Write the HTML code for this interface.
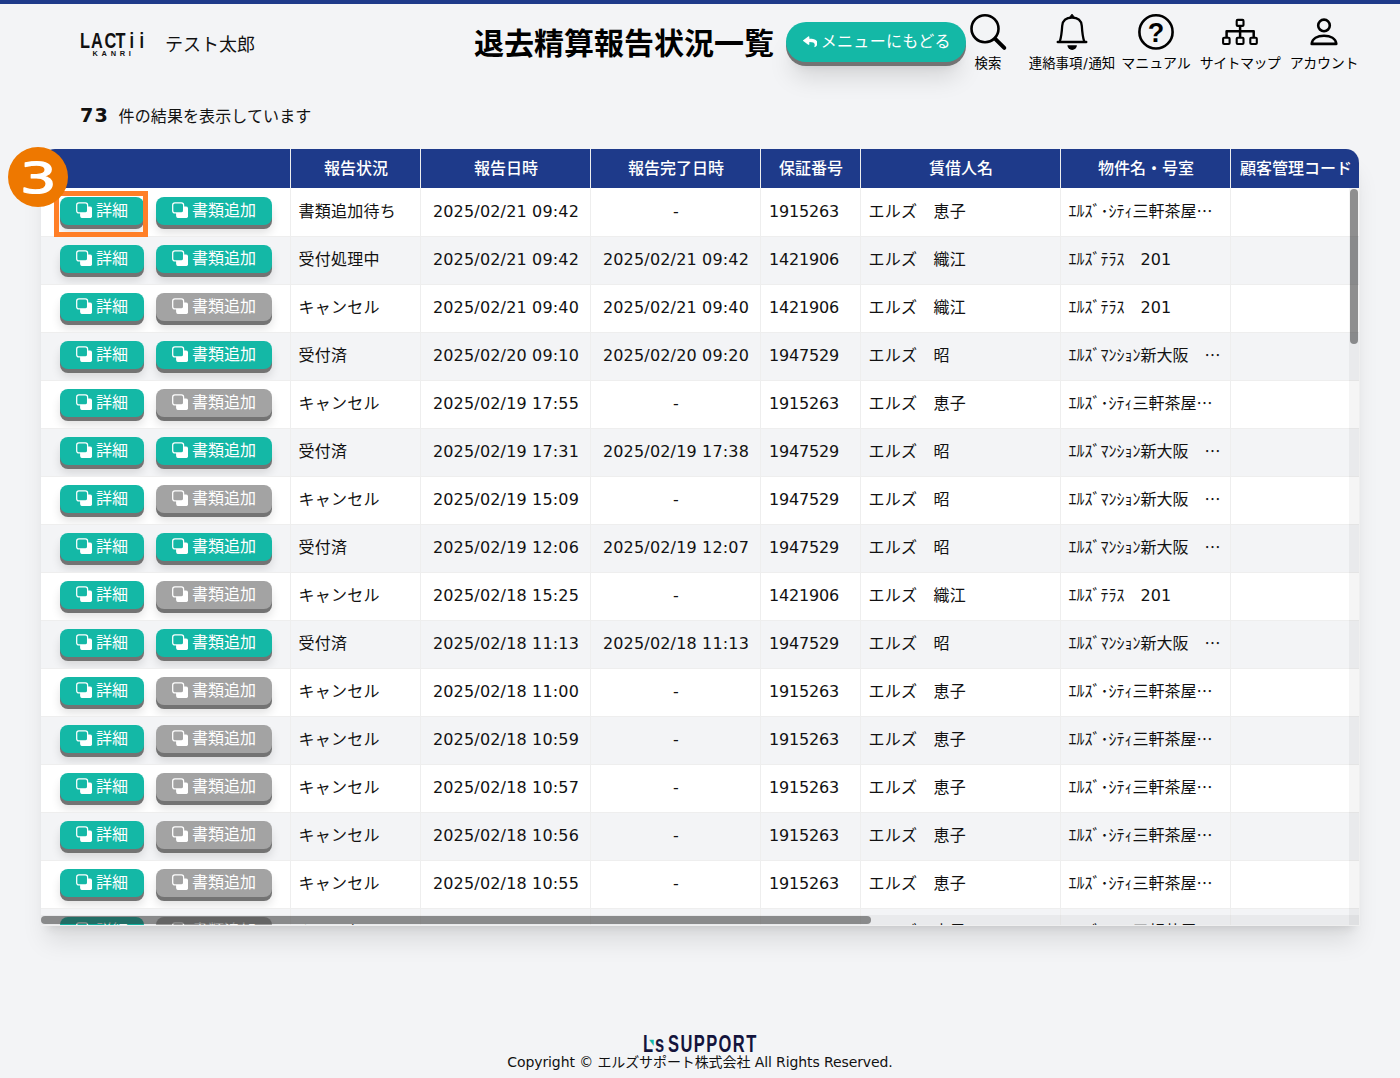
<!DOCTYPE html>
<html lang="ja">
<head>
<meta charset="utf-8">
<title>退去精算報告状況一覧</title>
<style>
*{box-sizing:border-box;margin:0;padding:0}
html,body{width:1400px;height:1078px;overflow:hidden}
body{background:#f3f4f6;font-family:"Liberation Sans","Noto Sans CJK JP",sans-serif;color:#111;position:relative}
.topbar{position:absolute;left:0;top:0;width:1400px;height:4px;background:#1e3a8a}
.logo{position:absolute;left:79.96px;top:27.9px;width:80px;color:#111}
.logo .l1{position:absolute;left:0;top:0;font-size:22.8px;line-height:24px;white-space:nowrap;font-weight:700;transform:scaleX(.717);transform-origin:0 0}
.logo .l1 span{display:inline-block}
.logo .l2{position:absolute;left:12.5px;top:21.8px;font-size:7.4px;line-height:8px;font-weight:700;letter-spacing:3.75px;white-space:nowrap}
.user{position:absolute;left:165px;top:32px;font-size:18px;line-height:26px;white-space:nowrap}
.title{position:absolute;left:474px;top:23.5px;font-size:30px;line-height:40px;font-weight:700;white-space:nowrap;color:#000}
.back{position:absolute;left:786px;top:22px;width:180px;height:40px;border-radius:20px;background:#14b8a6;box-shadow:0 4px 0 #737373,0 20px 25px -5px rgba(0,0,0,.13),0 10px 10px -6px rgba(0,0,0,.1);color:#fff;font-size:16px;line-height:40px;white-space:nowrap}
.nav{position:absolute;top:0;width:84px;height:80px;text-align:center;font-size:14px;white-space:nowrap;color:#000;font-family:"DejaVu Sans","Noto Sans CJK JP",sans-serif}
.nav svg{position:absolute;left:0;top:0}
.nav .lb{position:absolute;left:-10px;right:-10px;top:54px;line-height:18px}
.count{position:absolute;left:80px;top:102px;white-space:nowrap;font-size:16px;line-height:28px}
.count{letter-spacing:.1px}
.count b{font-family:"DejaVu Sans","Liberation Sans",sans-serif;font-size:19.2px;font-weight:700;margin-right:9.5px;letter-spacing:1.2px}
.wrap{position:absolute;left:41px;top:149px;width:1319px;height:777px;overflow:hidden;background:#fff;border-radius:14px 14px 0 0;border-right:1px solid #efefef;border-bottom:1px solid #efefef;box-shadow:0 20px 25px -5px rgba(0,0,0,.1),0 8px 10px -6px rgba(0,0,0,.1)}
table{border-collapse:collapse;table-layout:fixed;width:1500px}
th{height:39px;background:#1e3a8a;color:#fff;font-size:16px;font-weight:500;text-align:center;border-left:1px solid #eee;white-space:nowrap;overflow:hidden;padding:0 0 4px 2px}
th:first-child{border-left:none}
td{height:48px;font-size:16px;white-space:nowrap;overflow:hidden;border-left:1px solid #eee;padding:0 8px;vertical-align:middle;letter-spacing:.25px}
td:first-child{border-left:none}
tbody tr+tr td{box-shadow:inset 0 1px 0 #eee}
tr.odd td{background:#fff}
tr.even td{background:#f3f4f6}
td.c0{padding:0;position:relative}
td.c2,td.c3{text-align:center}
td.c2,td.c3,td.c4{font-family:"DejaVu Sans","Liberation Sans","Noto Sans CJK JP",sans-serif;letter-spacing:.17px;padding-bottom:2px}
td.c2,td.c3{padding-left:10px}
td.c4{letter-spacing:-.2px;padding-left:8.5px}
td.c1,td.c5,td.c6{padding-bottom:4px}
td.c6{font-family:"Noto Sans CJK JP",sans-serif;letter-spacing:0}
td.c6 .d{font-family:"DejaVu Sans",sans-serif;font-size:16px;position:relative;top:0px}
.btn{position:absolute;top:9px;height:28px;border-radius:8px;background:#14b8a6;color:#fff;box-shadow:0 4px 0 #737373,0 8px 10px rgba(0,0,0,.12);font-size:16px;line-height:28px;letter-spacing:0;display:block;white-space:nowrap}
.btn.b1{left:19px;width:83.5px}
.btn.b2{left:115px;width:116px}
.btn.dis{background:#a3a3a3}
.btn.dis .icf{fill:#a3a3a3}
.btn .ic{position:absolute;left:16px;top:5px;width:16px;height:16px}
.btn span{position:absolute;left:36px;top:0}
.hl{position:absolute;left:54px;top:191px;width:94px;height:46px;border:5px solid #ff7f27;pointer-events:none}
.badge{position:absolute;left:8px;top:147px;width:60px;height:60px}
.vsb{position:absolute;left:1349px;top:188px;width:10px;height:737px;background:rgba(0,0,0,.04)}
.vsb i{position:absolute;left:1px;top:1px;width:8px;height:155px;border-radius:4px;background:rgba(47,47,47,.515)}
.hsb{position:absolute;left:41px;top:915px;width:1318px;height:10px;background:rgba(0,0,0,.04)}
.hsb i{position:absolute;left:0;top:1px;width:830px;height:8px;border-radius:4px;background:rgba(47,47,47,.515)}
.flogo{position:absolute;left:642.8px;top:1031.7px;font-size:23.3px;line-height:24px;font-weight:700;color:#14143c;white-space:nowrap;transform:scaleX(.708);transform-origin:0 0}
.flogo span{display:inline-block}
.flogo .s{margin-left:2.75px}
.flogo .sup{margin-left:5.4px;letter-spacing:2px}
.fap{position:absolute;left:649.2px;top:1039.4px;font-family:"DejaVu Sans",sans-serif;font-size:8px;line-height:8px;color:#14b8a6;transform:scale(.75,1);transform-origin:0 0}
.fcopy{position:absolute;left:0;width:1400px;text-align:center;top:1052px;font-size:14px;line-height:20px;color:#111;font-family:"DejaVu Sans","Noto Sans CJK JP",sans-serif;white-space:nowrap;letter-spacing:-.1px}
</style>
</head>
<body>
<div class="topbar"></div>
<div class="logo"><div class="l1"><span style="margin-right:1.39px">L</span><span style="margin-right:2.3px">A</span><span style="margin-right:-.94px">C</span><span style="margin-right:5.54px">T</span><span style="margin-right:7.64px">i</span><span>i</span></div><div class="l2">KANRI</div></div>
<div class="user">テスト太郎</div>
<div class="title">退去精算報告状況一覧</div>
<div class="back"><svg style="position:absolute;left:16.5px;top:14px" width="14.5" height="11.5" viewBox="0 20 512 472" preserveAspectRatio="none"><path fill="#fff" d="M8.3 189.9l176-152c15.4-13.3 39.7-2.5 39.7 18.2v80c160.600 1.800 288 34 288 186.300 0 61.400-39.600 122.300-83.300 154.100-13.700 9.900-33.100-2.500-28.100-18.600C446 312 379 271 224 268.700V356.600c0 20.700-24.300 31.500-39.700 18.200l-176-152c-11.100-9.600-11.100-26.800 0-36.300z"/></svg><span style="position:absolute;left:34.8px;top:0;letter-spacing:.28px">メニューにもどる</span></div>

<div class="nav" style="left:946px"><svg width="84" height="56" viewBox="0 0 84 56" fill="none" stroke="#000" stroke-linecap="round"><circle cx="39" cy="28.7" r="13.5" stroke-width="2.6"/><path d="M49.2 38.9L58.3 47.9" stroke-width="4"/></svg><div class="lb" style="font-size:13.4px;top:55px">検索</div></div>
<div class="nav" style="left:1030px"><svg width="84" height="56" viewBox="0 0 84 56" fill="none" stroke="#000" stroke-width="2.5" stroke-linecap="round" stroke-linejoin="round"><path d="M27.8 42H56.2"/><path d="M29.8 41.5C31.6 36 31.9 31 32.2 25.800C32.7 20.6 36.5 17.7 42 17.7C47.5 17.7 51.3 20.6 51.8 25.800C52.1 31 52.4 36 54.2 41.5" stroke-width="2.3"/><path d="M39.600 17.2L42 14.200L44.400 17.2Z" fill="#000" stroke-width="1"/><path d="M37.400 45.2H46.900A4.750 4.8 0 0 1 37.400 45.2Z" fill="#000" stroke="none"/></svg><div class="lb" style="font-size:13.4px;top:55px">連絡事項<span style="margin:0 .8px">/</span>通知</div></div>
<div class="nav" style="left:1114px"><svg width="84" height="56" viewBox="0 0 84 56" fill="none" stroke="#000" stroke-width="2.6"><circle cx="42" cy="31.9" r="16.6"/><text x="42" y="42.1" text-anchor="middle" font-family="Liberation Sans, sans-serif" font-weight="700" font-size="27" fill="#000" stroke="none">?</text></svg><div class="lb">マニュアル</div></div>
<div class="nav" style="left:1198px"><svg width="84" height="56" viewBox="0 0 84 56" fill="none" stroke="#000" stroke-width="2.1" stroke-linejoin="round"><rect x="38.7" y="19.9" width="6.8" height="6" rx="1"/><rect x="25.1" y="37.8" width="6.5" height="6.2" rx="1"/><rect x="38.7" y="37.8" width="6.8" height="6.2" rx="1"/><rect x="52.3" y="37.8" width="6.500" height="6.2" rx="1"/><path d="M42.1 26.5V37.2M28.600 37.2V31.3H55.700V37.2" stroke-width="2.5"/></svg><div class="lb" style="letter-spacing:-.6px">サイトマップ</div></div>
<div class="nav" style="left:1282px"><svg width="84" height="56" viewBox="0 0 84 56" fill="none" stroke="#000" stroke-width="2.6" stroke-linejoin="round"><circle cx="42" cy="25.4" r="5.8"/><path d="M29.700 43.9C30.2 38.5 35.5 35.8 42 35.8S53.800 38.5 54.300 43.9Z"/></svg><div class="lb" style="letter-spacing:-.25px">アカウント</div></div>

<div class="count"><b>73</b>件の結果を表示しています</div>

<div class="wrap">
<table>
<colgroup><col style="width:249px"><col style="width:130px"><col style="width:170px"><col style="width:170px"><col style="width:100px"><col style="width:200px"><col style="width:170px"><col style="width:311px"></colgroup>
<thead><tr><th></th><th>報告状況</th><th>報告日時</th><th>報告完了日時</th><th>保証番号</th><th>賃借人名</th><th>物件名・号室</th><th style="text-align:left;padding-left:9.5px">顧客管理コード</th></tr></thead>
<tbody>
<tr class="odd"><td class="c0"><span class="btn b1"><svg class="ic" viewBox="0 0 16 16"><rect x="4.1" y="4.4" width="12" height="11.7" rx="2.3" fill="#fff"/><rect x="0.7" y="0.8" width="10.9" height="10.1" rx="2.2" fill="#14b8a6" stroke="#fff" stroke-width="1.25" class="icf"/></svg><span>詳細</span></span><span class="btn b2"><svg class="ic" viewBox="0 0 16 16"><rect x="4.1" y="4.4" width="12" height="11.7" rx="2.3" fill="#fff"/><rect x="0.7" y="0.8" width="10.9" height="10.1" rx="2.2" fill="#14b8a6" stroke="#fff" stroke-width="1.25" class="icf"/></svg><span>書類追加</span></span></td><td class="c1">書類追加待ち</td><td class="c2">2025/02/21 09:42</td><td class="c3">-</td><td class="c4">1915263</td><td class="c5">エルズ　恵子</td><td class="c6">ｴﾙｽﾞ･ｼﾃｨ三軒茶屋…</td><td class="c7"></td></tr>
<tr class="even"><td class="c0"><span class="btn b1"><svg class="ic" viewBox="0 0 16 16"><rect x="4.1" y="4.4" width="12" height="11.7" rx="2.3" fill="#fff"/><rect x="0.7" y="0.8" width="10.9" height="10.1" rx="2.2" fill="#14b8a6" stroke="#fff" stroke-width="1.25" class="icf"/></svg><span>詳細</span></span><span class="btn b2"><svg class="ic" viewBox="0 0 16 16"><rect x="4.1" y="4.4" width="12" height="11.7" rx="2.3" fill="#fff"/><rect x="0.7" y="0.8" width="10.9" height="10.1" rx="2.2" fill="#14b8a6" stroke="#fff" stroke-width="1.25" class="icf"/></svg><span>書類追加</span></span></td><td class="c1">受付処理中</td><td class="c2">2025/02/21 09:42</td><td class="c3">2025/02/21 09:42</td><td class="c4">1421906</td><td class="c5">エルズ　織江</td><td class="c6">ｴﾙｽﾞﾃﾗｽ　<span class="d">201</span></td><td class="c7"></td></tr>
<tr class="odd"><td class="c0"><span class="btn b1"><svg class="ic" viewBox="0 0 16 16"><rect x="4.1" y="4.4" width="12" height="11.7" rx="2.3" fill="#fff"/><rect x="0.7" y="0.8" width="10.9" height="10.1" rx="2.2" fill="#14b8a6" stroke="#fff" stroke-width="1.25" class="icf"/></svg><span>詳細</span></span><span class="btn b2 dis"><svg class="ic" viewBox="0 0 16 16"><rect x="4.1" y="4.4" width="12" height="11.7" rx="2.3" fill="#fff"/><rect x="0.7" y="0.8" width="10.9" height="10.1" rx="2.2" fill="#14b8a6" stroke="#fff" stroke-width="1.25" class="icf"/></svg><span>書類追加</span></span></td><td class="c1">キャンセル</td><td class="c2">2025/02/21 09:40</td><td class="c3">2025/02/21 09:40</td><td class="c4">1421906</td><td class="c5">エルズ　織江</td><td class="c6">ｴﾙｽﾞﾃﾗｽ　<span class="d">201</span></td><td class="c7"></td></tr>
<tr class="even"><td class="c0"><span class="btn b1"><svg class="ic" viewBox="0 0 16 16"><rect x="4.1" y="4.4" width="12" height="11.7" rx="2.3" fill="#fff"/><rect x="0.7" y="0.8" width="10.9" height="10.1" rx="2.2" fill="#14b8a6" stroke="#fff" stroke-width="1.25" class="icf"/></svg><span>詳細</span></span><span class="btn b2"><svg class="ic" viewBox="0 0 16 16"><rect x="4.1" y="4.4" width="12" height="11.7" rx="2.3" fill="#fff"/><rect x="0.7" y="0.8" width="10.9" height="10.1" rx="2.2" fill="#14b8a6" stroke="#fff" stroke-width="1.25" class="icf"/></svg><span>書類追加</span></span></td><td class="c1">受付済</td><td class="c2">2025/02/20 09:10</td><td class="c3">2025/02/20 09:20</td><td class="c4">1947529</td><td class="c5">エルズ　昭</td><td class="c6">ｴﾙｽﾞﾏﾝｼｮﾝ新大阪　…</td><td class="c7"></td></tr>
<tr class="odd"><td class="c0"><span class="btn b1"><svg class="ic" viewBox="0 0 16 16"><rect x="4.1" y="4.4" width="12" height="11.7" rx="2.3" fill="#fff"/><rect x="0.7" y="0.8" width="10.9" height="10.1" rx="2.2" fill="#14b8a6" stroke="#fff" stroke-width="1.25" class="icf"/></svg><span>詳細</span></span><span class="btn b2 dis"><svg class="ic" viewBox="0 0 16 16"><rect x="4.1" y="4.4" width="12" height="11.7" rx="2.3" fill="#fff"/><rect x="0.7" y="0.8" width="10.9" height="10.1" rx="2.2" fill="#14b8a6" stroke="#fff" stroke-width="1.25" class="icf"/></svg><span>書類追加</span></span></td><td class="c1">キャンセル</td><td class="c2">2025/02/19 17:55</td><td class="c3">-</td><td class="c4">1915263</td><td class="c5">エルズ　恵子</td><td class="c6">ｴﾙｽﾞ･ｼﾃｨ三軒茶屋…</td><td class="c7"></td></tr>
<tr class="even"><td class="c0"><span class="btn b1"><svg class="ic" viewBox="0 0 16 16"><rect x="4.1" y="4.4" width="12" height="11.7" rx="2.3" fill="#fff"/><rect x="0.7" y="0.8" width="10.9" height="10.1" rx="2.2" fill="#14b8a6" stroke="#fff" stroke-width="1.25" class="icf"/></svg><span>詳細</span></span><span class="btn b2"><svg class="ic" viewBox="0 0 16 16"><rect x="4.1" y="4.4" width="12" height="11.7" rx="2.3" fill="#fff"/><rect x="0.7" y="0.8" width="10.9" height="10.1" rx="2.2" fill="#14b8a6" stroke="#fff" stroke-width="1.25" class="icf"/></svg><span>書類追加</span></span></td><td class="c1">受付済</td><td class="c2">2025/02/19 17:31</td><td class="c3">2025/02/19 17:38</td><td class="c4">1947529</td><td class="c5">エルズ　昭</td><td class="c6">ｴﾙｽﾞﾏﾝｼｮﾝ新大阪　…</td><td class="c7"></td></tr>
<tr class="odd"><td class="c0"><span class="btn b1"><svg class="ic" viewBox="0 0 16 16"><rect x="4.1" y="4.4" width="12" height="11.7" rx="2.3" fill="#fff"/><rect x="0.7" y="0.8" width="10.9" height="10.1" rx="2.2" fill="#14b8a6" stroke="#fff" stroke-width="1.25" class="icf"/></svg><span>詳細</span></span><span class="btn b2 dis"><svg class="ic" viewBox="0 0 16 16"><rect x="4.1" y="4.4" width="12" height="11.7" rx="2.3" fill="#fff"/><rect x="0.7" y="0.8" width="10.9" height="10.1" rx="2.2" fill="#14b8a6" stroke="#fff" stroke-width="1.25" class="icf"/></svg><span>書類追加</span></span></td><td class="c1">キャンセル</td><td class="c2">2025/02/19 15:09</td><td class="c3">-</td><td class="c4">1947529</td><td class="c5">エルズ　昭</td><td class="c6">ｴﾙｽﾞﾏﾝｼｮﾝ新大阪　…</td><td class="c7"></td></tr>
<tr class="even"><td class="c0"><span class="btn b1"><svg class="ic" viewBox="0 0 16 16"><rect x="4.1" y="4.4" width="12" height="11.7" rx="2.3" fill="#fff"/><rect x="0.7" y="0.8" width="10.9" height="10.1" rx="2.2" fill="#14b8a6" stroke="#fff" stroke-width="1.25" class="icf"/></svg><span>詳細</span></span><span class="btn b2"><svg class="ic" viewBox="0 0 16 16"><rect x="4.1" y="4.4" width="12" height="11.7" rx="2.3" fill="#fff"/><rect x="0.7" y="0.8" width="10.9" height="10.1" rx="2.2" fill="#14b8a6" stroke="#fff" stroke-width="1.25" class="icf"/></svg><span>書類追加</span></span></td><td class="c1">受付済</td><td class="c2">2025/02/19 12:06</td><td class="c3">2025/02/19 12:07</td><td class="c4">1947529</td><td class="c5">エルズ　昭</td><td class="c6">ｴﾙｽﾞﾏﾝｼｮﾝ新大阪　…</td><td class="c7"></td></tr>
<tr class="odd"><td class="c0"><span class="btn b1"><svg class="ic" viewBox="0 0 16 16"><rect x="4.1" y="4.4" width="12" height="11.7" rx="2.3" fill="#fff"/><rect x="0.7" y="0.8" width="10.9" height="10.1" rx="2.2" fill="#14b8a6" stroke="#fff" stroke-width="1.25" class="icf"/></svg><span>詳細</span></span><span class="btn b2 dis"><svg class="ic" viewBox="0 0 16 16"><rect x="4.1" y="4.4" width="12" height="11.7" rx="2.3" fill="#fff"/><rect x="0.7" y="0.8" width="10.9" height="10.1" rx="2.2" fill="#14b8a6" stroke="#fff" stroke-width="1.25" class="icf"/></svg><span>書類追加</span></span></td><td class="c1">キャンセル</td><td class="c2">2025/02/18 15:25</td><td class="c3">-</td><td class="c4">1421906</td><td class="c5">エルズ　織江</td><td class="c6">ｴﾙｽﾞﾃﾗｽ　<span class="d">201</span></td><td class="c7"></td></tr>
<tr class="even"><td class="c0"><span class="btn b1"><svg class="ic" viewBox="0 0 16 16"><rect x="4.1" y="4.4" width="12" height="11.7" rx="2.3" fill="#fff"/><rect x="0.7" y="0.8" width="10.9" height="10.1" rx="2.2" fill="#14b8a6" stroke="#fff" stroke-width="1.25" class="icf"/></svg><span>詳細</span></span><span class="btn b2"><svg class="ic" viewBox="0 0 16 16"><rect x="4.1" y="4.4" width="12" height="11.7" rx="2.3" fill="#fff"/><rect x="0.7" y="0.8" width="10.9" height="10.1" rx="2.2" fill="#14b8a6" stroke="#fff" stroke-width="1.25" class="icf"/></svg><span>書類追加</span></span></td><td class="c1">受付済</td><td class="c2">2025/02/18 11:13</td><td class="c3">2025/02/18 11:13</td><td class="c4">1947529</td><td class="c5">エルズ　昭</td><td class="c6">ｴﾙｽﾞﾏﾝｼｮﾝ新大阪　…</td><td class="c7"></td></tr>
<tr class="odd"><td class="c0"><span class="btn b1"><svg class="ic" viewBox="0 0 16 16"><rect x="4.1" y="4.4" width="12" height="11.7" rx="2.3" fill="#fff"/><rect x="0.7" y="0.8" width="10.9" height="10.1" rx="2.2" fill="#14b8a6" stroke="#fff" stroke-width="1.25" class="icf"/></svg><span>詳細</span></span><span class="btn b2 dis"><svg class="ic" viewBox="0 0 16 16"><rect x="4.1" y="4.4" width="12" height="11.7" rx="2.3" fill="#fff"/><rect x="0.7" y="0.8" width="10.9" height="10.1" rx="2.2" fill="#14b8a6" stroke="#fff" stroke-width="1.25" class="icf"/></svg><span>書類追加</span></span></td><td class="c1">キャンセル</td><td class="c2">2025/02/18 11:00</td><td class="c3">-</td><td class="c4">1915263</td><td class="c5">エルズ　恵子</td><td class="c6">ｴﾙｽﾞ･ｼﾃｨ三軒茶屋…</td><td class="c7"></td></tr>
<tr class="even"><td class="c0"><span class="btn b1"><svg class="ic" viewBox="0 0 16 16"><rect x="4.1" y="4.4" width="12" height="11.7" rx="2.3" fill="#fff"/><rect x="0.7" y="0.8" width="10.9" height="10.1" rx="2.2" fill="#14b8a6" stroke="#fff" stroke-width="1.25" class="icf"/></svg><span>詳細</span></span><span class="btn b2 dis"><svg class="ic" viewBox="0 0 16 16"><rect x="4.1" y="4.4" width="12" height="11.7" rx="2.3" fill="#fff"/><rect x="0.7" y="0.8" width="10.9" height="10.1" rx="2.2" fill="#14b8a6" stroke="#fff" stroke-width="1.25" class="icf"/></svg><span>書類追加</span></span></td><td class="c1">キャンセル</td><td class="c2">2025/02/18 10:59</td><td class="c3">-</td><td class="c4">1915263</td><td class="c5">エルズ　恵子</td><td class="c6">ｴﾙｽﾞ･ｼﾃｨ三軒茶屋…</td><td class="c7"></td></tr>
<tr class="odd"><td class="c0"><span class="btn b1"><svg class="ic" viewBox="0 0 16 16"><rect x="4.1" y="4.4" width="12" height="11.7" rx="2.3" fill="#fff"/><rect x="0.7" y="0.8" width="10.9" height="10.1" rx="2.2" fill="#14b8a6" stroke="#fff" stroke-width="1.25" class="icf"/></svg><span>詳細</span></span><span class="btn b2 dis"><svg class="ic" viewBox="0 0 16 16"><rect x="4.1" y="4.4" width="12" height="11.7" rx="2.3" fill="#fff"/><rect x="0.7" y="0.8" width="10.9" height="10.1" rx="2.2" fill="#14b8a6" stroke="#fff" stroke-width="1.25" class="icf"/></svg><span>書類追加</span></span></td><td class="c1">キャンセル</td><td class="c2">2025/02/18 10:57</td><td class="c3">-</td><td class="c4">1915263</td><td class="c5">エルズ　恵子</td><td class="c6">ｴﾙｽﾞ･ｼﾃｨ三軒茶屋…</td><td class="c7"></td></tr>
<tr class="even"><td class="c0"><span class="btn b1"><svg class="ic" viewBox="0 0 16 16"><rect x="4.1" y="4.4" width="12" height="11.7" rx="2.3" fill="#fff"/><rect x="0.7" y="0.8" width="10.9" height="10.1" rx="2.2" fill="#14b8a6" stroke="#fff" stroke-width="1.25" class="icf"/></svg><span>詳細</span></span><span class="btn b2 dis"><svg class="ic" viewBox="0 0 16 16"><rect x="4.1" y="4.4" width="12" height="11.7" rx="2.3" fill="#fff"/><rect x="0.7" y="0.8" width="10.9" height="10.1" rx="2.2" fill="#14b8a6" stroke="#fff" stroke-width="1.25" class="icf"/></svg><span>書類追加</span></span></td><td class="c1">キャンセル</td><td class="c2">2025/02/18 10:56</td><td class="c3">-</td><td class="c4">1915263</td><td class="c5">エルズ　恵子</td><td class="c6">ｴﾙｽﾞ･ｼﾃｨ三軒茶屋…</td><td class="c7"></td></tr>
<tr class="odd"><td class="c0"><span class="btn b1"><svg class="ic" viewBox="0 0 16 16"><rect x="4.1" y="4.4" width="12" height="11.7" rx="2.3" fill="#fff"/><rect x="0.7" y="0.8" width="10.9" height="10.1" rx="2.2" fill="#14b8a6" stroke="#fff" stroke-width="1.25" class="icf"/></svg><span>詳細</span></span><span class="btn b2 dis"><svg class="ic" viewBox="0 0 16 16"><rect x="4.1" y="4.4" width="12" height="11.7" rx="2.3" fill="#fff"/><rect x="0.7" y="0.8" width="10.9" height="10.1" rx="2.2" fill="#14b8a6" stroke="#fff" stroke-width="1.25" class="icf"/></svg><span>書類追加</span></span></td><td class="c1">キャンセル</td><td class="c2">2025/02/18 10:55</td><td class="c3">-</td><td class="c4">1915263</td><td class="c5">エルズ　恵子</td><td class="c6">ｴﾙｽﾞ･ｼﾃｨ三軒茶屋…</td><td class="c7"></td></tr>
<tr class="even"><td class="c0"><span class="btn b1"><svg class="ic" viewBox="0 0 16 16"><rect x="4.1" y="4.4" width="12" height="11.7" rx="2.3" fill="#fff"/><rect x="0.7" y="0.8" width="10.9" height="10.1" rx="2.2" fill="#14b8a6" stroke="#fff" stroke-width="1.25" class="icf"/></svg><span>詳細</span></span><span class="btn b2 dis"><svg class="ic" viewBox="0 0 16 16"><rect x="4.1" y="4.4" width="12" height="11.7" rx="2.3" fill="#fff"/><rect x="0.7" y="0.8" width="10.9" height="10.1" rx="2.2" fill="#14b8a6" stroke="#fff" stroke-width="1.25" class="icf"/></svg><span>書類追加</span></span></td><td class="c1">キャンセル</td><td class="c2">2025/02/18 10:54</td><td class="c3">-</td><td class="c4">1915263</td><td class="c5">エルズ　恵子</td><td class="c6">ｴﾙｽﾞ･ｼﾃｨ三軒茶屋…</td><td class="c7"></td></tr>
</tbody>
</table>
</div>
<div class="vsb"><i></i></div>
<div class="hsb"><i></i></div>
<div class="hl"></div>
<svg class="badge" viewBox="0 0 60 60"><circle cx="30" cy="30" r="30" fill="#ee7800"/><text transform="translate(30.2 45.8) scale(1.345 1)" x="0" y="0" text-anchor="middle" font-family="DejaVu Sans, Liberation Sans, sans-serif" font-weight="400" font-size="43.2" fill="#fff" stroke="#fff" stroke-width="1.2" stroke-linejoin="round">3</text></svg>

<div class="flogo"><span>L</span><span class="s">s</span><span class="sup">SUPPORT</span></div><div class="fap">◥</div>
<div class="fcopy">Copyright © エルズサポート株式会社 All Rights Reserved.</div>
</body>
</html>
